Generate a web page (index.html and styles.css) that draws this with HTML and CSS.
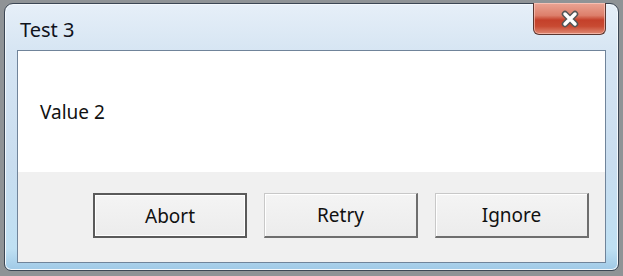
FILE: index.html
```html
<!DOCTYPE html>
<html lang="en">
<head>
  <meta charset="UTF-8" />
  <title>Test 3</title>
  <link rel="stylesheet" href="styles.css">
</head>
<body>

<div class="window">
  <div class="titlebar">
    <span class="title">Test 3</span>
    <button class="close" title="Close">
      <svg width="24" height="18" viewBox="0 0 24 18">
        <path d="M7 4 L17 14 M17 4 L7 14" stroke="#555555" stroke-width="6.5" stroke-linecap="round"/>
        <path d="M7 4 L17 14 M17 4 L7 14" stroke="#ffffff" stroke-width="3.5" stroke-linecap="round"/>
      </svg>
    </button>
  </div>

  <div class="client">
    <div class="message">Value 2</div>
    <div class="actions">
      <button class="btn default">Abort</button>
      <button class="btn">Retry</button>
      <button class="btn">Ignore</button>
    </div>
  </div>
</div>

</body>
</html>
```

FILE: styles.css
```css
body {
  margin: 0;
  background: #8f9396;
  font-family: "Noto Sans", "Open Sans", Arial, sans-serif;
}

.window {
  box-sizing: border-box;
  width: 615px;
  height: 268px;
  margin: 3px 4px 0 4px;
  padding: 0 12px 8px 12px;
  border: 1px solid #3b4654;
  border-radius: 9px 9px 7px 7px;
  background: linear-gradient(to bottom, #e6eff8 0%, #d6e5f3 18%, #c9ddef 60%, #bfe0f3 92%, #9fc9e6 100%);
  box-shadow: inset 0 0 0 1px #f3f8fc;
}

.titlebar {
  display: flex;
  justify-content: space-between;
  align-items: flex-start;
  height: 46px;
}

.title {
  margin: 12px 0 0 3px;
  font-size: 20px;
  color: #10131c;
}

.close {
  width: 73px;
  height: 32px;
  margin-top: -1px;
  padding: 0;
  border: 1px solid #5a3630;
  border-top: none;
  border-radius: 0 0 6px 6px;
  background: linear-gradient(to bottom, #eaa595 0%, #dd7f6b 40%, #c4402a 55%, #c84a32 75%, #e08a74 100%);
  box-shadow: inset 0 0 0 1px rgba(255, 210, 200, 0.6);
  display: flex;
  justify-content: center;
  align-items: center;
}

.client {
  border: 1px solid #70849a;
  background: #f0f0f0;
}

.message {
  height: 121px;
  display: flex;
  align-items: center;
  padding-left: 22px;
  background: #ffffff;
  font-size: 19px;
  color: #111111;
}

.actions {
  display: flex;
  justify-content: flex-end;
  gap: 17px;
  padding: 21px 16px 24px 0;
}

.btn {
  box-sizing: border-box;
  width: 154px;
  height: 45px;
  font-family: "Noto Sans", "Open Sans", Arial, sans-serif;
  font-size: 19px;
  color: #111111;
  background: linear-gradient(to bottom, #f4f4f4, #ececec);
  border-top: 1px solid #c8c8c8;
  border-left: 1px solid #c8c8c8;
  border-right: 2px solid #6e6e6e;
  border-bottom: 2px solid #6e6e6e;
  box-shadow: inset 1px 1px 0 #ffffff;
  padding: 0;
}

.btn.default {
  border: 2px solid #5a5a5a;
  box-shadow: inset 0 0 0 1px #ffffff;
}
```
